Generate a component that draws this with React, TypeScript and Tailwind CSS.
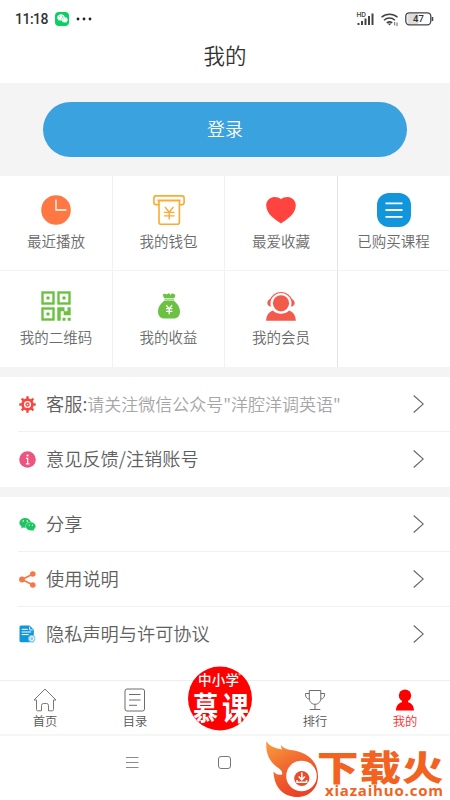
import React, { useState } from 'react';
import { FaWeixin } from 'react-icons/fa';

const ClockIcon = () => (
  <svg width="30" height="30" viewBox="0 0 30 30" fill="none">
    <circle cx="15" cy="15" r="14.8" fill="#ff7844" />
    <path d="M15 4.5V15h10.5" stroke="#fff" strokeWidth="1.3" />
  </svg>
);

const WalletIcon = () => (
  <svg width="32" height="30" viewBox="0 0 32 30" fill="none" stroke="#fcaa30" strokeWidth="1.6">
    <path d="M6 9.6H3A2.2 2.2 0 0 1 .9 7.4V3.1A2.2 2.2 0 0 1 3 .9h26a2.2 2.2 0 0 1 2.1 2.2v4.3A2.2 2.2 0 0 1 29 9.6h-2.6" />
    <path d="M4.5 5.5h23" strokeWidth="2" />
    <path d="M6 6v21.2a2 2 0 0 0 2 2h16.4a2 2 0 0 0 2-2V6" />
    <path d="M12 12l4.2 5.2L20.4 12M16.2 17v7.5M10.9 17.4h10.6M10.9 20.9h10.6" strokeWidth="1.4" />
  </svg>
);

const HeartIcon = () => (
  <svg width="30" height="28" viewBox="0 0 30 28">
    <path d="M15 27.5C10 24 .2 18.5.2 9.3.2 4.5 4 .9 8.3.9c2.8 0 5.2.8 6.7 2.4C16.5 1.7 18.9.9 21.7.9c4.3 0 8.1 3.6 8.1 8.4C29.8 18.5 20 24 15 27.5z" fill="#ff443f" />
  </svg>
);

const CourseIcon = () => (
  <svg width="34" height="34" viewBox="0 0 34 34">
    <rect width="34" height="34" rx="12" fill="#1296db" />
    <path d="M8.5 10.3h17M8.5 17h17M8.5 23.8h17" stroke="#fff" strokeWidth="1.8" />
  </svg>
);

const QrIcon = () => (
  <svg width="30" height="30" viewBox="0 0 30 30" fill="none" stroke="#6cc143" strokeWidth="2.4">
    <rect x="1.5" y="1.5" width="11" height="11" />
    <rect x="17.5" y="1.5" width="11" height="11" />
    <rect x="1.5" y="17.5" width="11" height="11" />
    <g fill="#6cc143" stroke="none">
      <circle cx="7" cy="7" r="1.8" />
      <circle cx="23" cy="7" r="1.8" />
      <circle cx="7" cy="23" r="1.8" />
      <path d="M16.3 16.3h7.2v4h3v-4h3.2v8h-7v-4h-3v9.4h-3.4zM21.5 26.8h3v3h-3zM26.7 26.8h3v3h-3z" />
    </g>
  </svg>
);

const MoneyIcon = () => (
  <svg width="22" height="26" viewBox="0 0 22 26">
    <path d="M6.3 5.2C5.5 3.9 5 3 5 1.8 5 .7 6.5.4 7.5 1c.8.5 1.5.4 2.2-.2.8-.8 1.7-.7 2.3.1.3.5-.2 1.2.2 1.3.5 0 .6-1.4 1.5-1.7 1.5-.4 3.4.5 3.6 1.9.1 1-.7 1.9-1.2 2.8z" fill="#6cc143" />
    <path d="M6.3 5.7h9.8v1.4H6.3z" fill="#a6d98e" />
    <path d="M6.5 7.5h9.2C19.500 10.500 22 14.400 22 18.300c0 5-2.600 7.300-6.500 7.300h-9c-3.900 0-6.500-2.300-6.500-7.300 0-3.900 2.600-7.800 6.500-10.800z" fill="#6cc143" />
    <path d="M8.3 12.2l2.9 3.7 2.9-3.7M11.2 15.5v5.7M8 15.7h6.4M8 18.3h6.4" fill="none" stroke="#fff" strokeWidth="1.3" />
  </svg>
);

const MemberIcon = () => (
  <svg width="30" height="30" viewBox="0 0 30 30" fill="#f25a4c">
    <circle cx="15" cy="12.3" r="8.1" />
    <path d="M4.2 9.5a11.3 11.3 0 0 1 21.6 0" fill="none" stroke="#f25a4c" strokeWidth="1.2" />
    <path d="M5.5 7.5C3.5 8 1.3 9.7 1.3 12S3 15.3 5 15.7c-.8-2.6-.7-5.400.5-8.200zM24.500 7.500c2 .5 4.200 2.200 4.200 4.500s-1.700 3.300-3.700 3.700c.8-2.600.7-5.400-.5-8.200z" />
    <path d="M.2 29.800c0-4.900 2.600-8.700 6.600-10.200 4.600 4.300 11.800 4.300 16.400 0 4 1.500 6.600 5.300 6.600 10.200z" />
  </svg>
);

const GearIcon = () => (
  <svg width="17" height="17" viewBox="0 0 17 17" fill="none" stroke="#fb453e">
    <circle cx="8.5" cy="8.5" r="4.9" strokeWidth="2.6" />
    <circle cx="8.5" cy="8.5" r="1.5" strokeWidth="1.3" />
    <path d="M8.5.3v3M8.5 13.7v3M.3 8.5h3M13.7 8.5h3M2.7 2.7l2 2M12.3 12.3l2 2M2.7 14.3l2-2M12.3 4.7l2-2" strokeWidth="2.4" />
  </svg>
);

const InfoIcon = () => (
  <svg width="17" height="17" viewBox="0 0 17 17">
    <circle cx="8.5" cy="8.5" r="8.3" fill="#ed557e" />
    <circle cx="8.6" cy="4.5" r="1.1" fill="#fff" />
    <path d="M7 7.3h1.7v5.5M6.9 12.9h3.5" stroke="#fff" strokeWidth="1.2" fill="none" />
  </svg>
);

const ShareIcon = () => (
  <svg width="17" height="17" viewBox="0 0 17 17" fill="#f67748">
    <path d="M14 3L3 8.5 14 14" fill="none" stroke="#f67748" strokeWidth="1.7" />
    <circle cx="3" cy="8.5" r="2.9" />
    <circle cx="13.8" cy="3" r="2.8" />
    <circle cx="13.8" cy="14" r="2.8" />
  </svg>
);

const PolicyIcon = () => (
  <svg width="17" height="18" viewBox="0 0 17 18">
    <path d="M2 .5h8.6l4.2 4.2v12.6H2A1.5 1.5 0 0 1 .5 15.8V2A1.5 1.5 0 0 1 2 .5z" fill="#1296db" />
    <path d="M10.6 1.7v3.2h3.2" fill="none" stroke="#fff" strokeWidth=".9" />
    <path d="M2.7 4.3h6M2.7 7h9.5M2.7 9.6h7" stroke="#fff" strokeWidth="1" />
    <circle cx="12.8" cy="13.6" r="3.6" fill="#8ccbef" />
    <circle cx="12.8" cy="13.6" r="2" fill="none" stroke="#fff" strokeWidth=".9" />
  </svg>
);

const HomeIcon = () => (
  <svg width="24" height="24" viewBox="0 0 24 24" fill="none" stroke="#777" strokeWidth="1">
    <path d="M1 12L12 1l11 11H20.5v9.5a1.3 1.3 0 0 1-1.3 1.3h-3.7v-5.3a2 2 0 0 0-2-2h-3a2 2 0 0 0-2 2v5.3H4.800a1.300 1.300 0 0 1-1.300-1.300V12z" strokeLinejoin="round" />
  </svg>
);

const CatalogIcon = () => (
  <svg width="22" height="24" viewBox="0 0 22 24" fill="none" stroke="#6c6c6c" strokeWidth="1">
    <rect x="1" y="1" width="19.5" height="22" rx="2" />
    <path d="M5 6.5h11.5M5 12h11.5M5 17.3h8" />
  </svg>
);

const TrophyIcon = () => (
  <svg width="22" height="22" viewBox="0 0 22 22" fill="none" stroke="#6c6c6c" strokeWidth="1">
    <path d="M5.3 1.5h11.5V9c0 3.6-2.3 6.3-5.75 6.3S5.3 12.6 5.3 9zM11 15.3v5M5.8 20.5h10.5" />
    <path d="M5.3 4.5H1.5C1.5 8.5 3 10 5.5 10M16.8 4.5h3.8c0 4-1.5 5.5-4 5.5" />
  </svg>
);

const MineIcon = () => (
  <svg width="18" height="22" viewBox="0 0 18 22" fill="#ff0000">
    <circle cx="9" cy="6.6" r="6.2" />
    <path d="M6 11h6v2.3c3.5.7 6 3.7 6 8.3H0c0-4.6 2.5-7.6 6-8.3z" />
  </svg>
);

const entries = [
  { label: '最近播放', icon: <ClockIcon /> },
  { label: '我的钱包', icon: <WalletIcon /> },
  { label: '最爱收藏', icon: <HeartIcon /> },
  { label: '已购买课程', icon: <CourseIcon /> },
  { label: '我的二维码', icon: <QrIcon /> },
  { label: '我的收益', icon: <MoneyIcon /> },
  { label: '我的会员', icon: <MemberIcon /> },
];

const tabs = [
  { label: '首页', icon: <HomeIcon /> },
  { label: '目录', icon: <CatalogIcon /> },
  { label: '', icon: null },
  { label: '排行', icon: <TrophyIcon /> },
  { label: '我的', icon: <MineIcon /> },
];

type RowProps = { icon: React.ReactNode; label: string; hint?: string; divider?: boolean };

function Row({ icon, label, hint, divider }: RowProps) {
  return (
    <button className={`flex items-center ml-[18px] w-[432px] h-[55px] pl-px pr-[26px] text-left border-b ${divider ? 'border-[#f1f1f1]' : 'border-transparent'}`}>
      <span className="w-[17px] flex items-center justify-center shrink-0">{icon}</span>
      <span className="flex-1 ml-[10px] pb-[2px] text-[18.2px] leading-[26px] text-[#606060] whitespace-nowrap">
        {label}
        {hint && <span className="text-[17px] text-[#a6a6a6]">{hint}</span>}
      </span>
      <svg width="11" height="18" viewBox="0 0 11 18" fill="none" stroke="#666" strokeWidth="1.1">
        <path d="M.7.5L10.3 9 .7 17.5" />
      </svg>
    </button>
  );
}

function StatusBar() {
  return (
    <div className="h-[37px] px-[15px] flex items-center justify-between">
      <div className="flex items-center">
        <span className="w-[33px] font-[Roboto] font-medium text-[14px] tracking-[-0.5px] leading-none text-[#333]">11:18</span>
        <span className="ml-[7px] w-[14px] h-[14px] rounded-[4px] bg-[#07d160] flex items-center justify-center">
          <FaWeixin size={11} className="text-white" />
        </span>
        <svg className="ml-[7px]" width="16" height="4" viewBox="0 0 16 4" fill="#222">
          <circle cx="2" cy="2" r="1.4" />
          <circle cx="8" cy="2" r="1.4" />
          <circle cx="14" cy="2" r="1.4" />
        </svg>
      </div>
      <svg className="mr-px" width="78" height="16" viewBox="0 0 78 16" fill="none" stroke="#444">
        <text x="0.5" y="5.5" fontSize="6.5" fontFamily="Inter, sans-serif" fontWeight="600" fill="#444" stroke="none">HD</text>
        <path d="M2.5 14v-2M6 14V10M9.5 14V7.5M13 14V5M16.5 14V2.5" strokeWidth="2" />
        <path d="M25.5 6.2a12 12 0 0 1 16 0M28 9.2a8.3 8.3 0 0 1 11 0M30.7 12a4.5 4.5 0 0 1 5.6 0" strokeWidth="1.5" />
        <path d="M31.7 12.5l1.8 2 1.8-2z" fill="#444" stroke="none" />
        <path d="M38.7 11v3.5M41 11.5V15" strokeWidth=".8" />
        <rect x="51.5" y="2.5" width="11" height="11" rx="2" fill="#ddd" stroke="none" />
        <rect x="49.8" y="1.8" width="25" height="12" rx="3.5" strokeWidth="1.3" />
        <path d="M76.5 6v4" strokeWidth="1.5" />
        <text x="62.5" y="11.2" fontSize="9.5" fontFamily="Roboto, sans-serif" fontWeight="500" fill="#333" stroke="none" textAnchor="middle">47</text>
      </svg>
    </div>
  );
}

// Round brand badge that sticks out above the tab bar
function BrandBadge() {
  return (
    <svg className="absolute left-[188px] top-[-15px]" width="64" height="65" viewBox="0 0 64 65" fill="#fff">
      <defs>
        <clipPath id="badge"><circle cx="32" cy="32.5" r="32" /></clipPath>
      </defs>
      <circle cx="32" cy="32.5" r="32" fill="#fe0000" />
      <g clipPath="url(#badge)" fontFamily="'Noto Sans CJK SC', sans-serif">
        <text x="10" y="19" fontSize="13.5" fontWeight="500" textLength="41">中小学</text>
        <text x="50.5" y="10.5" fontSize="5">®</text>
        <text transform="translate(5 53.5) scale(.9 1.13)" fontSize="28" fontWeight="700">慕</text>
        <text transform="translate(34 53.5) scale(.96 1.13)" fontSize="28" fontWeight="700">课</text>
      </g>
    </svg>
  );
}

function SiteMark() {
  return (
    <svg className="absolute left-[264px] top-[738px]" width="186" height="62" viewBox="0 0 186 62">
      <defs>
        <linearGradient id="flame" x1="0" y1="0" x2=".5" y2="1">
          <stop offset="0" stopColor="#f9a03c" />
          <stop offset=".5" stopColor="#f26a30" />
          <stop offset="1" stopColor="#ea4326" />
        </linearGradient>
      </defs>
      <path d="M2.5 3C5.5 9 12 10 18 11.500c-.7-1.500-1-3-.7-4.500 1.700 3 4.500 4.300 9 5C42 13.500 54 22 54 38.500c0 12-9 20.500-20.500 20.500C20 59 10 50 9.500 33.500c2 2.500 5 4 8.500 3 1-3-1.500-5-5-7.500C6 24 1 15 2.500 3z" fill="url(#flame)" />
      <circle cx="37.5" cy="38" r="15.3" fill="#fff" />
      <circle cx="37.8" cy="40.5" r="7.6" fill="#e94b2b" />
      <path d="M37.8 34.5v6M34.7 38.5l3.1 3.3 3.1-3.3M33 42v2.2h9.6V42" fill="none" stroke="#fff" strokeWidth="1.5" />
      <g fill="#f26322">
        <g fontFamily="'Noto Sans CJK SC', sans-serif" fontWeight="900">
          <text transform="translate(53 42.5) scale(1.12 .94)" fontSize="37">下</text>
          <text transform="translate(95.5 42.5) scale(1.12 .94)" fontSize="37">载</text>
          <text transform="translate(138 42.5) scale(1.12 .94)" fontSize="37">火</text>
        </g>
        <text x="61" y="58" fontSize="15" fontFamily="'Open Sans', sans-serif" fontWeight="700" textLength="118">xiazaihuo.com</text>
      </g>
    </svg>
  );
}

export default function App() {
  const [active, setActive] = useState(4);

  return (
    <div className="relative w-[450px] h-[800px] overflow-hidden bg-white flex flex-col font-['Noto_Sans_CJK_SC',sans-serif] font-[350]">
      <StatusBar />
      <h1 className="h-[46px] pt-px text-center text-[21.5px] leading-[34px] text-[#333]">我的</h1>

      {/* Login */}
      <div className="h-[93px] pt-[19px] px-[43px] bg-[#f4f4f4]">
        <button className="w-full h-[55px] pb-[2px] rounded-full bg-[#39a2df] text-white text-[18px]">登录</button>
      </div>

      {/* Shortcuts */}
      <div className="h-[191px] grid grid-cols-[113px_112px_113px_112px] grid-rows-[95px_96px]">
        {entries.map((e, i) => (
          <button
            key={e.label}
            className={`flex flex-col items-center border-r ${i < 4 ? 'pt-[15px] border-b border-b-[#f3f3f3]' : 'pt-[16px]'} ${i === 3 ? 'border-r-transparent' : i % 4 === 2 ? 'border-r-[#e4e4e4]' : 'border-r-[#f1f1f1]'}`}
          >
            <span className="h-[38px] flex items-center">{e.icon}</span>
            <span className="text-[14.5px] leading-[24px] text-[#6a6a6a] whitespace-nowrap">{e.label}</span>
          </button>
        ))}
      </div>

      <div className="border-y-[10px] border-[#f4f4f4]">
        <Row icon={<GearIcon />} label="客服:" hint={'请关注微信公众号"洋腔洋调英语"'} divider />
        <Row icon={<InfoIcon />} label="意见反馈/注销账号" />
      </div>

      <div className="flex-1">
        <Row icon={<FaWeixin size={17} color="#1fc462" />} label="分享" divider />
        <Row icon={<ShareIcon />} label="使用说明" divider />
        <Row icon={<PolicyIcon />} label="隐私声明与许可协议" />
      </div>

      {/* Tab bar */}
      <nav className="relative h-[56px] grid grid-cols-5 border-t border-[#eee] border-b-2 border-b-[#f6f6f6]">
        {tabs.map((t, i) => (
          <button key={i} onClick={() => setActive(i)} className="flex flex-col items-center pt-[6px]">
            <span className="h-[25px] flex items-center">{t.icon}</span>
            <span className={`text-[12.3px] leading-[19px] ${active === i ? 'text-[#fe2b2b]' : 'text-[#555]'}`}>{t.label}</span>
          </button>
        ))}
        <BrandBadge />
      </nav>

      {/* System navigation */}
      <div className="h-[64px] flex">
        <svg className="ml-[126px] mt-[20px]" width="13" height="13" viewBox="0 0 13 13" stroke="#8a8a8a" strokeWidth="1">
          <path d="M0 1.5h12.5M0 6.5h12.5M0 11.5h12.5" />
        </svg>
        <span className="ml-[79px] mt-[20px] w-[13px] h-[13px] rounded-[3px] border border-[#777]" />
      </div>
      <SiteMark />
    </div>
  );
}
